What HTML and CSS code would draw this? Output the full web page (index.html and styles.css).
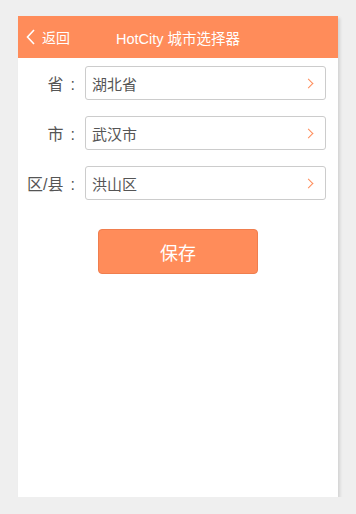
FILE: index.html
```html
<!DOCTYPE html>
<html lang="zh-CN">
<head>
    <meta charset="UTF-8">
    <meta name="viewport" content="width=device-width, initial-scale=1.0">
    <title>HotCity 城市选择器</title>
    <link rel="stylesheet" href="styles.css">
</head>
<body>
    <div class="page">
        <!-- Header -->
        <div class="header">
            <a class="back" href="#">
                <svg width="9" height="16" viewBox="0 0 9 16"><path d="M8 1 L1.5 8 L8 15" fill="none" stroke="#fff" stroke-width="1.6"/></svg>
                <span>返回</span>
            </a>
            <div class="title">HotCity 城市选择器</div>
        </div>

        <!-- Form -->
        <div class="form">
            <div class="row">
                <label>省<span class="colon">:</span></label>
                <div class="select"><span>湖北省</span><i class="arrow"></i></div>
            </div>
            <div class="row">
                <label>市<span class="colon">:</span></label>
                <div class="select"><span>武汉市</span><i class="arrow"></i></div>
            </div>
            <div class="row">
                <label>区/县<span class="colon">:</span></label>
                <div class="select"><span>洪山区</span><i class="arrow"></i></div>
            </div>
            <div class="actions">
                <button class="btn-save">保存</button>
            </div>
        </div>
    </div>
</body>
</html>
```

FILE: styles.css
```css
body {
    margin: 0;
    background-color: #efefef;
    font-family: "Liberation Sans", "Noto Sans CJK SC", sans-serif;
}

.page {
    width: 320px;
    height: 481px;
    margin: 16px 0 0 18px;
    background-color: #fff;
    box-shadow: 2px 2px 3px rgba(0, 0, 0, 0.12);
}

/* Header */
.header {
    position: relative;
    height: 42px;
    background-color: #ff8c5a;
    display: flex;
    align-items: center;
    justify-content: center;
}

.back {
    position: absolute;
    left: 8px;
    top: 0;
    height: 42px;
    display: flex;
    align-items: center;
    color: #fff;
    text-decoration: none;
    font-size: 14px;
}

.back svg {
    margin-right: 7px;
}

.title {
    color: #fff;
    font-size: 14.5px;
}

/* Form */
.form {
    padding: 8px 12px 0 0;
}

.row {
    display: flex;
    align-items: center;
    margin-bottom: 16px;
}

.row label {
    width: 57px;
    padding-right: 10px;
    text-align: right;
    font-size: 16px;
    color: #555;
}

.colon {
    margin-left: 7px;
}

.select {
    flex: 1;
    height: 32px;
    border: 1px solid #ccc;
    border-radius: 3px;
    display: flex;
    align-items: center;
    justify-content: space-between;
    padding: 0 10px 0 6px;
    font-size: 15px;
    color: #555;
}

.arrow {
    width: 6px;
    height: 6px;
    border-top: 1.5px solid #ff8c5a;
    border-right: 1.5px solid #ff8c5a;
    transform: rotate(45deg);
    margin-right: 3px;
}

.actions {
    display: flex;
    justify-content: center;
    padding: 13px 0 0 12px;
}

.btn-save {
    width: 160px;
    height: 45px;
    background-color: #ff8c5a;
    border: 1px solid #f07e4e;
    border-radius: 4px;
    color: #fff;
    font-size: 18px;
    font-family: "Liberation Sans", "Noto Sans CJK SC", sans-serif;
}
```
